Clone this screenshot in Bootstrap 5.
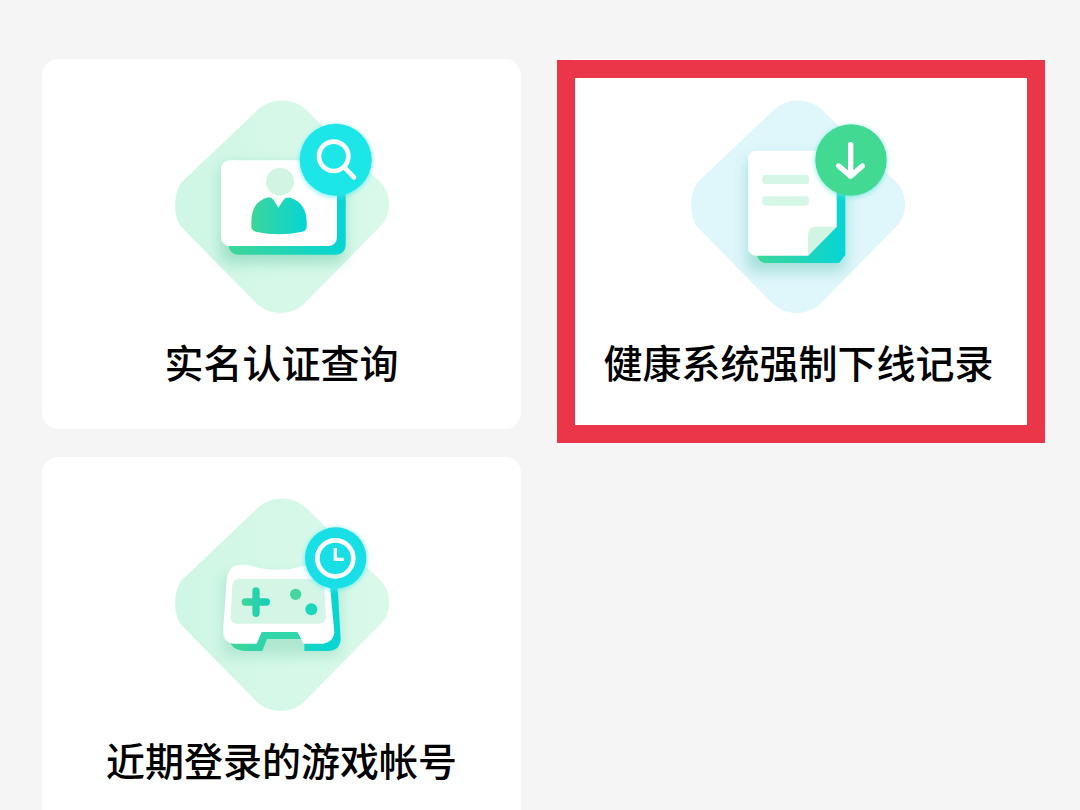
<!DOCTYPE html>
<html lang="zh-CN">
<head>
<meta charset="utf-8">
<meta name="viewport" content="width=device-width, initial-scale=1">
<title>服务</title>
<link href="https://cdn.jsdelivr.net/npm/bootstrap@5.3.0/dist/css/bootstrap.min.css" rel="stylesheet">
<style>
  body { background: #f5f5f5; font-family: "Noto Sans CJK SC", sans-serif; }
  .tiles { display: grid; grid-template-columns: 1fr 1fr; gap: 28px 38px; padding: 59px 42px 0; }
  .tile { border-radius: 16px; padding: 31px 0 45px; color: #000; }
  .tile-art { width: 240px; height: 230px; }
  .tile-name { font-size: 39px; line-height: 46px; font-weight: 500; margin-top: 18px; white-space: nowrap; }
  /* red frame drawn over the highlighted tile */
  .frame { position: absolute; inset: 1px -7px -14px -2px; border: 18px solid #ea3648; pointer-events: none; }
</style>
</head>
<body>
<svg class="position-absolute" width="0" height="0" aria-hidden="true">
  <defs>
    <path id="diamond" d="M285 67C328 20 402 20 445 67L660 277C695 312 695 377 660 409L440 633C400 680 325 680 285 637L64 412C38 382 38 310 64 277Z"/>
    <linearGradient id="teal"><stop offset="0" stop-color="#3ed598"/><stop offset="1" stop-color="#05d5d5"/></linearGradient>
    <linearGradient id="mint"><stop offset="0" stop-color="#cff6e6"/><stop offset=".5" stop-color="#d6f8e8"/><stop offset="1" stop-color="#d9f9e9"/></linearGradient>
    <filter id="soft" x="-30%" y="-30%" width="160%" height="160%"><feGaussianBlur stdDeviation="20"/></filter>
    <filter id="glow" x="-30%" y="-30%" width="160%" height="160%"><feGaussianBlur stdDeviation="7"/></filter>
  </defs>
</svg>
<main class="tiles">
  <a href="#identity" class="tile bg-white text-decoration-none d-flex flex-column align-items-center">
    <svg class="tile-art" viewBox="5 0 720 690" aria-hidden="true">
      <use href="#diamond" fill="url(#mint)"/>
      <rect x="180" y="225" width="375" height="295" rx="28" fill="#5fc4a2" opacity=".45" filter="url(#soft)"/>
      <rect x="205" y="240" width="351" height="254" rx="28" fill="url(#teal)"/>
      <rect x="182" y="211" width="348" height="257" rx="26" fill="#fff"/>
      <circle cx="359" cy="275" r="42" fill="#d1f4e3"/>
      <path d="M320 323Q332 319 340 330L354 353L370 329Q376 320 390 323C425 334 439 362 439 398V410C439 418 435 422 425 425Q356 440 286 425Q273 421 273 411V397C273 360 285 334 320 323Z" fill="url(#teal)"/>
      <circle cx="526" cy="213" r="110" fill="#48eaf0" opacity=".6" filter="url(#glow)"/>
      <circle cx="526" cy="209" r="108" fill="#1de6e8"/>
      <g fill="none" stroke="#fff"><circle cx="520" cy="199" r="44" stroke-width="14"/><path d="M551 231L581 262" stroke-width="14" stroke-linecap="round"/></g>
    </svg>
    <span class="tile-name">实名认证查询</span>
  </a>
  <a href="#offline" class="tile bg-white text-decoration-none position-relative d-flex flex-column align-items-center">
    <svg class="tile-art" viewBox="0 0 720 690" aria-hidden="true">
      <use href="#diamond" x="-8" fill="#dff6fb"/>
      <rect x="204" y="205" width="297" height="340" rx="28" fill="#5fc4b0" opacity=".45" filter="url(#soft)"/>
      <path d="M233 210H499V495L480 519H260Q233 515 233 485Z" fill="url(#teal)"/>
      <path d="M233 182H473V410L387 497H232Q207 497 207 472V208Q207 182 233 182Z" fill="#fff"/>
      <path d="M473 410L387 497V435Q387 410 413 410Z" fill="#d1f4e3"/>
      <rect x="250" y="254" width="140" height="28" rx="10" fill="#d6f6e7"/>
      <rect x="250" y="319" width="140" height="28" rx="10" fill="#d6f6e7"/>
      <circle cx="516" cy="214" r="110" fill="#65e8d8" opacity=".6" filter="url(#glow)"/>
      <circle cx="516" cy="210" r="107" fill="#42d993"/>
      <path d="M515 164V257M479 228L515 259L550 228" fill="none" stroke="#fff" stroke-width="16" stroke-linecap="round" stroke-linejoin="round"/>
    </svg>
    <span class="tile-name">健康系统强制下线记录</span>
    <span class="frame"></span>
  </a>
  <a href="#accounts" class="tile bg-white text-decoration-none d-flex flex-column align-items-center">
    <svg class="tile-art" viewBox="5 -3 720 690" aria-hidden="true">
      <use href="#diamond" y="-3" fill="url(#mint)"/>
      <path d="M190 260H540V500H190Z" fill="#5fc4a2" opacity=".32" filter="url(#soft)"/>
      <path d="M232 268H500Q530 275 533 310L541 452Q538 484 506 486H432V450H320L306 486H254Q222 484 212 465Z" fill="url(#teal)"/>
      <path d="M307 430H411L418 450H300Z" fill="#33d6a8"/>
      <path d="M222 231Q250 221 292 236Q354 248 402 238Q430 226 466 232Q504 240 508 280L522 430Q520 458 490 464H430L411 429H304L289 464H218Q187 458 188 426L199 272Q204 240 222 231Z" fill="#fff"/>
      <path d="M234 270H468Q491 272 492 291L497 384Q496 402 475 404H229Q211 402 211 384L216 287Q218 272 234 270Z" fill="#d5f5e6"/>
      <path d="M255 339H318M287 306V373" stroke="url(#plus)" fill="none" stroke-width="22" stroke-linecap="round"/>
      <linearGradient id="plus" gradientUnits="userSpaceOnUse" x1="244" x2="330" y1="0" y2="0"><stop offset="0" stop-color="#3fd59b"/><stop offset="1" stop-color="#12ceb9"/></linearGradient>
      <circle cx="406" cy="316" r="17" fill="#45d5a0"/>
      <circle cx="453" cy="361" r="18" fill="#19d6bd"/>
      <circle cx="526" cy="210" r="95" fill="#48eaf0" opacity=".6" filter="url(#glow)"/>
      <circle cx="526" cy="207" r="92" fill="#18dfe5"/>
      <circle cx="525" cy="208" r="54" fill="none" stroke="#fff" stroke-width="14"/>
      <path d="M525 177V211H550" fill="none" stroke="#fff" stroke-width="10"/>
    </svg>
    <span class="tile-name">近期登录的游戏帐号</span>
  </a>
</main>
<script src="https://cdn.jsdelivr.net/npm/bootstrap@5.3.0/dist/js/bootstrap.bundle.min.js"></script>
</body>
</html>
